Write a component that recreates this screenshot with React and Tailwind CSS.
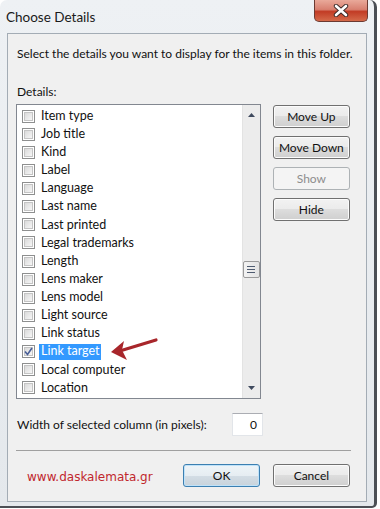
import React from "react";

const ITEMS = [
  "Item type",
  "Job title",
  "Kind",
  "Label",
  "Language",
  "Last name",
  "Last printed",
  "Legal trademarks",
  "Length",
  "Lens maker",
  "Lens model",
  "Light source",
  "Link status",
  "Link target",
  "Local computer",
  "Location",
];

const FONT = "font-['Lato','Noto_Sans',sans-serif]";

function CheckBox({ checked }) {
  return (
    <span className="flex h-[13px] w-[13px] shrink-0 items-center justify-center border border-[#8e8f8f] bg-white p-px">
      <span className="relative flex h-full w-full items-center justify-center border border-[#c4c4c4] bg-[linear-gradient(135deg,#dadada,#f6f6f6)]">
        {checked && (
          <svg width="9" height="9" viewBox="0 0 9 9" className="absolute">
            <path d="M1 4.5 L3.5 7.5 L8 1" fill="none" stroke="#4a5f97" strokeWidth="1.6" />
          </svg>
        )}
      </span>
    </span>
  );
}

function Btn({ children, disabled, primary, className = "" }) {
  const border = disabled
    ? "border-[#adb2b5] text-[#8d8d8d] bg-[#f4f4f4]"
    : primary
    ? "border-[#3c7fb1] text-[#111] bg-[linear-gradient(#eef4f8_0%,#e6edf2_50%,#d3dde5_50%,#c9d3db_100%)] shadow-[inset_0_0_0_1px_#bfe2f9]"
    : "border-[#707070] text-[#111] bg-[linear-gradient(#f2f2f2_0%,#ebebeb_50%,#dddddd_50%,#cfcfcf_100%)] shadow-[inset_0_0_0_1px_#fcfcfc]";
  return (
    <div
      className={`flex h-[23px] items-center justify-center rounded-[3px] border text-[12px] ${border} ${className}`}
    >
      {children}
    </div>
  );
}

function Scrollbar() {
  return (
    <div className="flex w-[18px] shrink-0 flex-col items-center border-l border-[#e3e3e3] bg-[#ececec]">
      <div className="flex h-[17px] w-full items-center justify-center pt-[2px]">
        <svg width="7" height="4" viewBox="0 0 7 4">
          <path d="M0 4 L3.5 0 L7 4 Z" fill="#3f4a5e" />
        </svg>
      </div>
      <div className="mt-[139px] flex h-[17px] w-[17px] flex-col items-center justify-center gap-[2px] rounded-[2px] border border-[#9a9a9a] bg-[linear-gradient(90deg,#f3f3f3,#e2e2e2)]">
        <span className="h-px w-[8px] bg-[#4e5b70]" />
        <span className="h-px w-[8px] bg-[#4e5b70]" />
        <span className="h-px w-[8px] bg-[#4e5b70]" />
      </div>
      <div className="flex-1" />
      <div className="flex h-[17px] w-full items-center justify-center pb-[4px]">
        <svg width="7" height="4" viewBox="0 0 7 4">
          <path d="M0 0 L7 0 L3.5 4 Z" fill="#3f4a5e" />
        </svg>
      </div>
    </div>
  );
}

export default function App() {
  return (
    <div className={`h-[509px] w-[380px] bg-white ${FONT}`}>
      <div className="flex h-[508px] w-[377px] flex-col overflow-hidden rounded-t-[7px] rounded-br-[5px] border-r-[3px] border-b-[2px] border-[#4b4f55] bg-[linear-gradient(#eef1f4,#e4e8ec)]">
        {/* Title bar */}
        <div className="flex h-[33px] shrink-0 items-start justify-between">
          <span className="pl-[6px] pt-[8px] text-[13.5px] leading-[18px] text-[#1a1a1a]">Choose Details</span>
          <div className="mr-[6px] flex h-[22px] w-[54px] items-center justify-center rounded-b-[5px] border border-t-0 border-[#6b3a32] bg-[linear-gradient(#e9a99a_0%,#d88070_45%,#c23c25_55%,#d46a4a_100%)]">
            <svg width="16" height="13" viewBox="0 0 16 13">
              <path d="M3 2 L13 11 M13 2 L3 11" stroke="#3b2a28" strokeWidth="4.4" strokeLinecap="round" />
              <path d="M3 2 L13 11 M13 2 L3 11" stroke="#ffffff" strokeWidth="2.6" strokeLinecap="round" />
            </svg>
          </div>
        </div>

        {/* Content */}
        <div className="mx-[7px] mb-[4px] flex flex-1 flex-col border border-[#a3acb5] bg-[#f0f0f0] pl-[8px] pr-[16px] text-[12px] text-[#111]">
          <p className="ml-px mt-[11px] whitespace-nowrap leading-[17px]">
            Select the details you want to display for the items in this folder.
          </p>
          <p className="ml-px mt-[21px] leading-[17px]">Details:</p>

          <div className="mt-[4px] flex gap-[12px]">
            <div className="relative flex h-[295px] w-[247px] border border-[#828790] bg-white">
              <div className="flex flex-1 flex-col pt-[2px] text-[12.5px]">
                {ITEMS.map((item) => {
                  const sel = item === "Link target";
                  return (
                    <div key={item} className="flex h-[18.13px] items-center pl-[5px]">
                      <CheckBox checked={sel} />
                      <span
                        className={`ml-[4px] flex h-[16px] items-center px-[2px] leading-none ${
                          sel ? "bg-[#3399ff] text-white" : ""
                        }`}
                      >
                        {item}
                      </span>
                    </div>
                  );
                })}
              </div>
              <Scrollbar />
              <svg
                width="50"
                height="28"
                viewBox="0 0 50 28"
                className="absolute left-[93px] top-[231px]"
              >
                <path d="M13 14 L46 4" stroke="#a8262b" strokeWidth="3.2" strokeLinecap="round" />
                <path d="M1 16 L14 5 L12 14 L17 24 Z" fill="#a8262b" />
              </svg>
            </div>

            <div className="mt-[1px] flex w-[78px] flex-col gap-[8px]">
              <Btn>Move Up</Btn>
              <Btn>Move Down</Btn>
              <Btn disabled>Show</Btn>
              <Btn>Hide</Btn>
            </div>
          </div>

          <div className="mt-[14px] flex items-center">
            <span className="ml-px w-[215px]">Width of selected column (in pixels):</span>
            <div className="flex h-[23px] w-[31px] items-center justify-end border border-[#e2e5e9] border-t-[#abadb3] bg-white pr-[5px]">
              0
            </div>
          </div>

          <div className="mt-[14px] h-px w-[335px] bg-[#a0a0a0]" />

          <div className="mt-[13px] flex items-center">
            <span className="ml-[11px] mt-[3px] w-[158px] font-['DejaVu_Sans',sans-serif] text-[12px] text-[#c1272d]">
              www.daskalemata.gr
            </span>
            <Btn primary className="w-[77px]">OK</Btn>
            <Btn className="ml-[13px] w-[78px]">Cancel</Btn>
          </div>
        </div>
      </div>
    </div>
  );
}
